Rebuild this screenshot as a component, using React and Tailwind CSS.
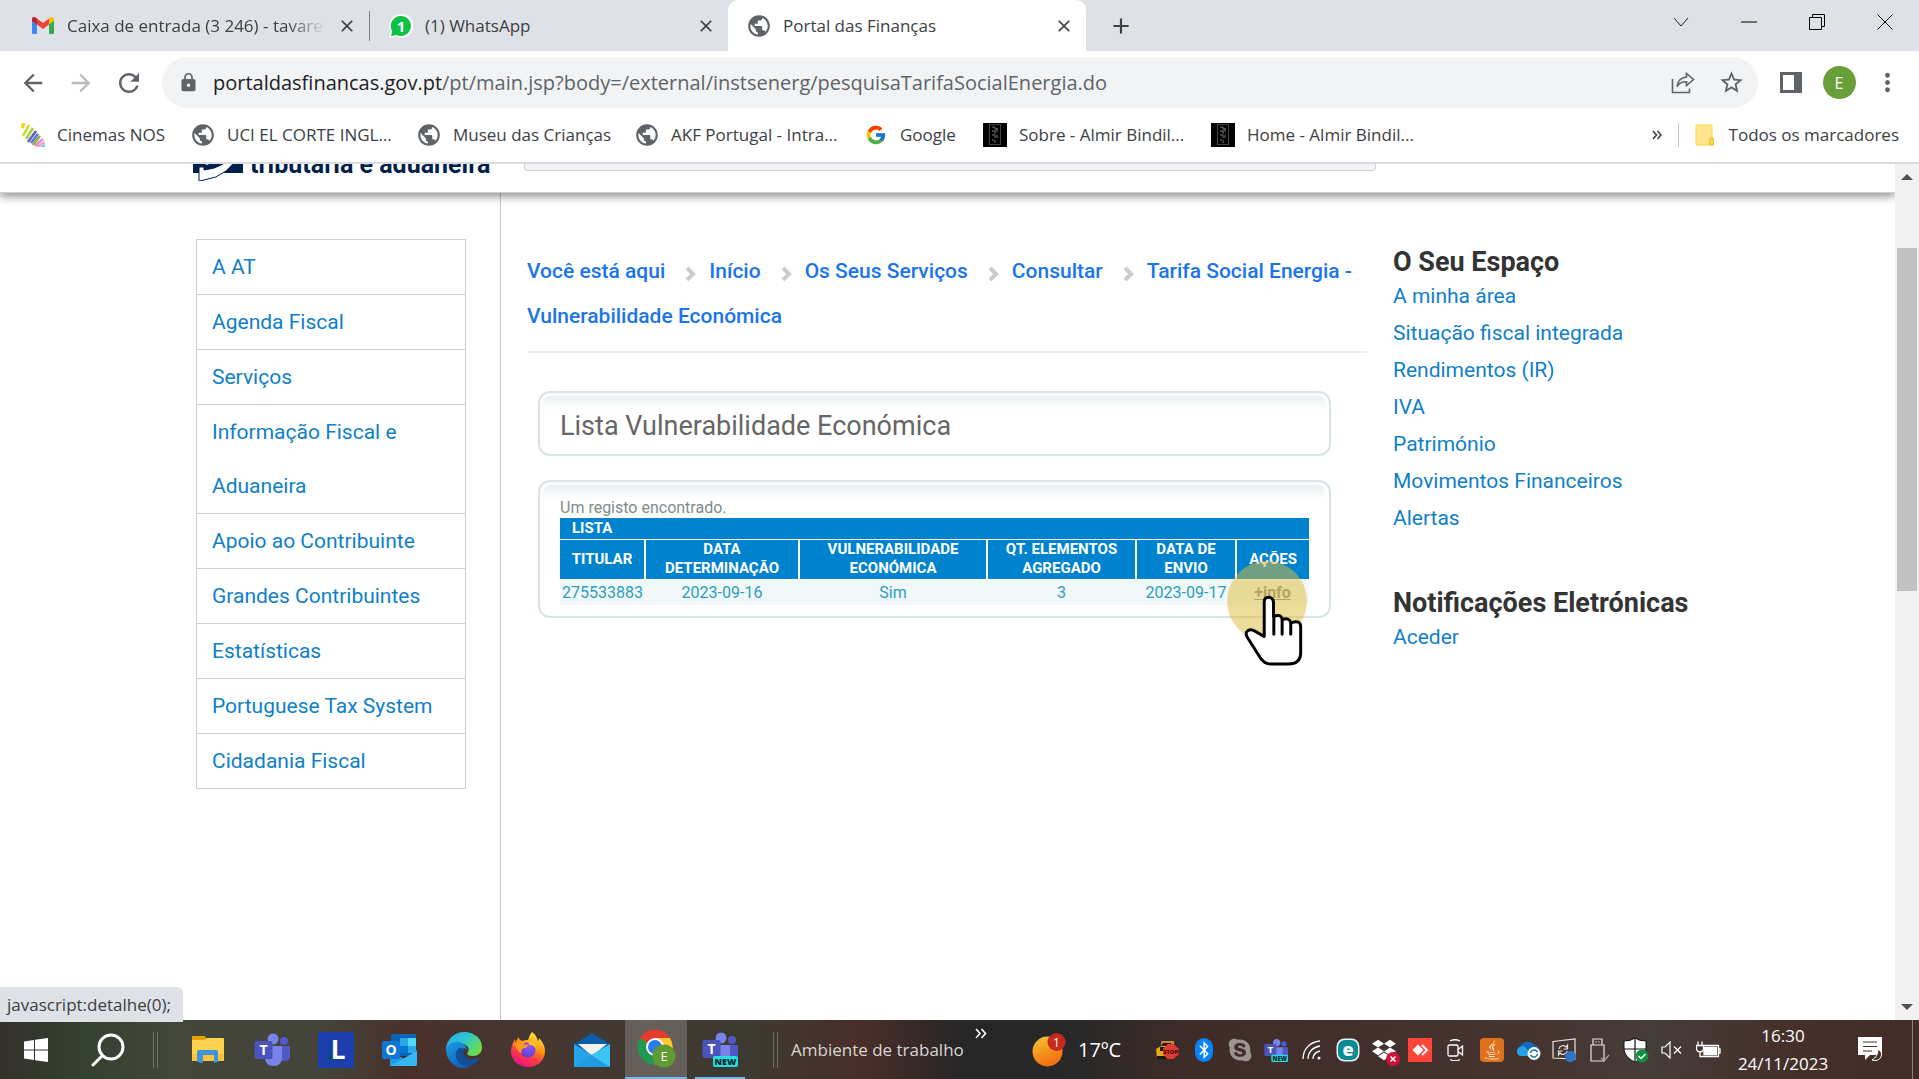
import React from 'react';
import { MdPublic, MdClose, MdAdd, MdArrowBack, MdArrowForward, MdRefresh, MdLock, MdStarBorder, MdMoreVert } from 'react-icons/md';
import { FcGoogle } from 'react-icons/fc';
import { FaDropbox, FaJava, FaSkype, FaBluetoothB } from 'react-icons/fa';

const menuItems = [
  'A AT',
  'Agenda Fiscal',
  'Serviços',
  'Informação Fiscal e Aduaneira',
  'Apoio ao Contribuinte',
  'Grandes Contribuintes',
  'Estatísticas',
  'Portuguese Tax System',
  'Cidadania Fiscal'
];

const breadcrumbs = ['Você está aqui', 'Início', 'Os Seus Serviços', 'Consultar', 'Tarifa Social Energia - Vulnerabilidade Económica'];

const spaceLinks = ['A minha área', 'Situação fiscal integrada', 'Rendimentos (IR)', 'IVA', 'Património', 'Movimentos Financeiros', 'Alertas'];

const columns = [
  { label: 'TITULAR', width: 'w-[85px]' },
  { label: 'DATA DETERMINAÇÃO', width: 'w-[154px]' },
  { label: 'VULNERABILIDADE ECONÓMICA', width: 'w-[188px]' },
  { label: 'QT. ELEMENTOS AGREGADO', width: 'w-[149px]' },
  { label: 'DATA DE ENVIO', width: 'w-[100px]' },
  { label: 'AÇÕES', width: 'w-[73px]' }
];

const rows = [
  { titular: '275533883', determinacao: '2023-09-16', vulneravel: 'Sim', agregado: '3', envio: '2023-09-17' }
];

/* ---------- Browser icons ---------- */

function GmailIcon() {
  return (
    <svg width="22" height="17" viewBox="0 0 22 17">
      <path d="M0 2v13.500q0 1.500 1.500 1.500H5V6z" fill="#4285f4" />
      <path d="M22 2v13.500q0 1.500-1.500 1.500H17V6z" fill="#34a853" />
      <path d="M17 1.500V7.500L22 3.700V2c0-2-2.200-2.600-3.500-1.600z" fill="#fbbc04" />
      <path d="M5 7.500V1.500L11 6l6-4.500v6L11 12z" fill="#ea4335" />
      <path d="M0 2v1.700l5 3.800v-6L3.500.4C2.200-.6 0 0 0 2z" fill="#c5221f" />
    </svg>
  );
}

function WhatsAppIcon() {
  return (
    <svg width="24" height="24" viewBox="0 0 24 24">
      <path d="M12 0a12 12 0 1 1-4 23L0 24l1.500-6A12 12 0 0 1 12 0z" fill="#fff" opacity=".8" />
      <path d="M12 2a10 10 0 1 1-4.500 19L2 22l1.200-5A10 10 0 0 1 12 2z" fill="#0cc143" />
      <text x="12" y="17.500" textAnchor="middle" fontSize="15" fontWeight="700" fill="#fff">1</text>
    </svg>
  );
}

function CinemasIcon() {
  return (
    <svg width="24" height="24" viewBox="0 0 24 24" strokeWidth="2.600">
      <path d="M1 5L3 0" stroke="#f7d117" strokeWidth="3.500" />
      <path d="M2 13L8 2" stroke="#c6dc2a" />
      <path d="M5 16L12 5" stroke="#a9cf38" />
      <path d="M7 19L15 8" stroke="#5a62c8" />
      <path d="M10 20L17 11" stroke="#6a6fd0" />
      <path d="M12 22L19 13" stroke="#7cb342" />
      <path d="M14 23L22 16" stroke="#f08bd0" />
      <path d="M16 24L24 19" stroke="#f4a0da" />
      <path d="M19 24h5v-3z" fill="#3fe0c8" />
    </svg>
  );
}

function AlmirIcon() {
  return (
    <svg width="24" height="24" viewBox="0 0 24 24">
      <rect width="24" height="24" fill="#000" />
      <rect x="6.500" y="1.500" width="11" height="20" fill="none" stroke="#444" />
      <path d="M9 4h3v2h3M9 8h6M12 8v3M9 12h3v3M14 12v3M9 17h2M12 17v3M14 5v2" stroke="#777" fill="none" />
    </svg>
  );
}

function FolderIcon() {
  return (
    <svg width="20" height="22" viewBox="0 0 20 22">
      <path d="M1 1h16v13h1.500v7H1z" fill="#ffe68c" stroke="#fbd54a" />
      <path d="M14.500 21v-5.500q0-1.500 2-1.500t2 1.500V21z" fill="#fbd54a" stroke="#e9bd2c" />
    </svg>
  );
}

function ShareIcon() {
  return (
    <svg width="24" height="24" viewBox="0 0 24 24" fill="none" stroke="#5f6368" strokeWidth="1.600">
      <path d="M1.500 8v13.500h17v-4" />
      <path d="M15.500 2.500l7 6-7 6v-3.800c-4.500 0-7.500 1.300-9.500 4.800.5-5 3.500-8.800 9.500-9.500z" />
    </svg>
  );
}

/* ---------- Taskbar icons ---------- */

function WindowsIcon() {
  return (
    <svg width="24" height="24" viewBox="0 0 24 24" fill="#fff">
      <path d="M0 3.400L10 2v9.500H0zM11 1.800L24 0v11.500H11zM0 12.500h10V22L0 20.600zM11 12.500h13V24l-13-1.800z" />
    </svg>
  );
}

function SearchIcon() {
  return (
    <svg width="34" height="34" viewBox="0 0 34 34" fill="none" stroke="#fff" strokeWidth="3">
      <circle cx="20" cy="14" r="12" />
      <path d="M11.500 22.500L2 32" strokeLinecap="round" />
    </svg>
  );
}

function ExplorerIcon() {
  return (
    <svg width="32" height="28" viewBox="0 0 32 28">
      <path d="M0 1q0-1 1-1h12l2 4H0z" fill="#e8a200" />
      <path d="M0 4h13l2-2h16q1 0 1 1v21q0 1-1 1H1q-1 0-1-1z" fill="#ffd24f" />
      <path d="M0 18h32v6q0 1-1 1H1q-1 0-1-1z" fill="#fcc43a" />
      <path d="M5 26V16q0-2 2-2h17q2 0 2 2v10l-4 1v-8H11v8z" fill="#3a97dc" />
    </svg>
  );
}

function TeamsIcon({ badge, size = 36 }) {
  return (
    <svg width={size} height={size} viewBox="0 0 36 36">
      <circle cx="30" cy="9" r="4" fill="#5059c9" />
      <path d="M26 14h9q1 0 1 1v9q0 5-6 5h-4z" fill="#5059c9" />
      <circle cx="19" cy="7" r="5.500" fill="#7b83eb" />
      <path d="M11 14h17v11q0 9-8.500 9T11 25z" fill="#7b83eb" />
      <rect x="0.500" y="9" width="18" height="18" rx="2" fill="#4b53bc" />
      <text x="9.500" y="23" textAnchor="middle" fontSize="14" fontWeight="700" fill="#fff">T</text>
      {badge && (
        <>
          <rect x="11" y="25" width="25" height="11" rx="2" fill="#22e0e0" />
          <text x="23.500" y="34" textAnchor="middle" fontSize="9" fontWeight="800" fill="#00202a">NEW</text>
        </>
      )}
    </svg>
  );
}

function LIcon() {
  return (
    <svg width="36" height="36" viewBox="0 0 36 36">
      <rect width="36" height="36" fill="#1d3fae" />
      <path d="M13 8L10 28h16l-13-4z" fill="#0c4a66" />
      <text x="20" y="27" textAnchor="middle" fontSize="26" fontWeight="700" fill="#fff">L</text>
    </svg>
  );
}

function OutlookIcon() {
  return (
    <svg width="36" height="36" viewBox="0 0 36 36">
      <rect x="9" y="2" width="25" height="22" rx="1" fill="#0a64b4" />
      <path d="M18 6h8v8h-8z" fill="#28a8ea" />
      <path d="M26 6h8v8h-8z" fill="#50d9ff" />
      <path d="M18 14h8v7h-8z" fill="#0078d4" />
      <path d="M26 14h8v7h-8z" fill="#28a8ea" />
      <path d="M8 18l14 9 13-9v14q0 2-2 2H8z" fill="#1e9de6" />
      <path d="M8 34l27-15v13q0 2-2 2z" fill="#35b8f1" />
      <rect y="9" width="18" height="18" rx="2" fill="#0f78d4" />
      <text x="9" y="23" textAnchor="middle" fontSize="14" fontWeight="700" fill="#fff">O</text>
    </svg>
  );
}

function EdgeIcon() {
  return (
    <svg width="36" height="36" viewBox="0 0 36 36">
      <defs>
        <linearGradient id="edgeTop" x1="0" y1="0" x2="1" y2="0.600">
          <stop offset="0" stopColor="#2aa9e8" />
          <stop offset="0.500" stopColor="#2cc4d4" />
          <stop offset="1" stopColor="#6ade4a" />
        </linearGradient>
        <linearGradient id="edgeSide" x1="0" y1="0" x2="0.600" y2="1">
          <stop offset="0" stopColor="#1b9de2" />
          <stop offset="1" stopColor="#0f63b8" />
        </linearGradient>
      </defs>
      <path d="M0 18C0 8 8 0 18 0c11 0 18 7 18 15 0 6-4 9-9 9-5 0-7-2-5-4 1.500-2 1-7-5-8C9 11 2 14 0 18z" fill="url(#edgeTop)" />
      <path d="M0 17c2-6 8-8 13-7 5 1 8 4 8 8-3-3-8-2-9 3-1 6 4 12 11 14-12 4-23-5-23-18z" fill="url(#edgeSide)" />
      <path d="M12 17c-4 4-3 12 4 16 6 3.500 14 0 17-6 .5-1-.5-1.500-1.500-1-7 3-14 0-14-6 0-1 .5-2 1-3-2-1-4.500-1.500-6.500 0z" fill="#124f97" />
    </svg>
  );
}

function FirefoxIcon() {
  return (
    <svg width="36" height="36" viewBox="0 0 36 36">
      <defs>
        <linearGradient id="foxBody" x1="0.800" y1="0" x2="0.300" y2="1">
          <stop offset="0" stopColor="#fff44f" />
          <stop offset="0.400" stopColor="#ff980e" />
          <stop offset="0.700" stopColor="#ff3647" />
          <stop offset="1" stopColor="#e31587" />
        </linearGradient>
        <radialGradient id="foxGlobe" cx="0.600" cy="0.300" r="0.800">
          <stop offset="0" stopColor="#9059ff" />
          <stop offset="1" stopColor="#5b3cc4" />
        </radialGradient>
      </defs>
      <path d="M22 0c4 3 5 6 6 9 1-1 1-2 1-3 4 4 6 9 6 13 0 9-7 16-17 16C8 35 1 28 1 19c0-5 2-9 4-12 0 1 0 2 .5 3C7 8 8 6 8 5c1 2 2 3 4 4 2-1 4-1 6-1 1-3 2-6 4-8z" fill="url(#foxBody)" />
      <circle cx="18" cy="18" r="7.500" fill="url(#foxGlobe)" />
      <path d="M4 12c3-2 6-2 8 0l6 1c0 2-2 3-5 3.500-2 1-2 3-1 5-4-2-6-5-8-9.500z" fill="#ff9a1f" />
      <path d="M18 9c5 0 9 4 9 9-2-4-5-5-8-5z" fill="#ffc02e" />
    </svg>
  );
}

function MailIcon() {
  return (
    <svg width="36" height="34" viewBox="0 0 36 34">
      <path d="M0 11L18 0l18 11v6H0z" fill="#0a5ba8" />
      <path d="M4 11h29L18 23z" fill="#f2f2f2" />
      <path d="M0 11l18 11v12H0z" fill="#25a5e8" />
      <path d="M36 11L17 22 0 34h36z" fill="#3cc4f4" />
      <path d="M17 22l19 12H0z" fill="#1f9be4" />
    </svg>
  );
}

function ChromeIcon() {
  return (
    <svg width="42" height="40" viewBox="0 0 42 40">
      <circle cx="20" cy="18" r="17.500" fill="#e33b2e" />
      <path d="M4.800 9.300A17.500 17.500 0 0 0 20 35.500l8-13z" fill="#1e9b50" />
      <path d="M20 9h15A17.500 17.500 0 0 1 20 35.500l8-14z" fill="#fcc934" />
      <circle cx="20" cy="18" r="9" fill="#fff" />
      <circle cx="20" cy="18" r="7" fill="#2a7be8" />
      <circle cx="29" cy="27" r="11.500" fill="#5f9a33" />
      <text x="29" y="32" textAnchor="middle" fontSize="13" fill="#fff">E</text>
    </svg>
  );
}

function WeatherIcon() {
  return (
    <svg width="34" height="34" viewBox="0 0 34 34">
      <defs>
        <linearGradient id="sun" x1="0.200" y1="0" x2="0.600" y2="1">
          <stop offset="0" stopColor="#f5c234" />
          <stop offset="1" stopColor="#f2690c" />
        </linearGradient>
      </defs>
      <circle cx="15.500" cy="18.500" r="15" fill="url(#sun)" />
      <circle cx="24.500" cy="9" r="9" fill="#c42b1c" />
      <text x="24.500" y="13.500" textAnchor="middle" fontSize="12" fill="#fff">1</text>
    </svg>
  );
}

/* ---------- Tray icons ---------- */

const trayIcons = [
  {
    name: 'Stop',
    icon: (
      <svg width="24" height="22" viewBox="0 0 24 22">
        <path d="M5 3q0-1 1-1h12v3h-3L5 8z" fill="#c98a3a" />
        <path d="M0 10l5-3h5v12H1z" fill="#e0a81c" />
        <path d="M4 8h5v4H4zM1 17h12v3H1zM7 4h8v3H5z" fill="#1c1a18" />
        <path d="M11.500 5h6l5 4.500v6l-5 4.500h-6L7 15.500v-6z" fill="#e23a2c" />
        <text x="14.700" y="15" textAnchor="middle" fontSize="6" fontWeight="700" fill="#1c0705">STOP</text>
      </svg>
    )
  },
  {
    name: 'Bluetooth',
    icon: (
      <span className="flex h-6 w-[18px] items-center justify-center rounded-full bg-[#0a84f5]">
        <FaBluetoothB size={18} color="#fff" />
      </span>
    )
  },
  { name: 'Skype', icon: <FaSkype size={26} color="#9c9490" /> },
  { name: 'Teams', icon: <TeamsIcon badge size={24} /> },
  {
    name: 'Wi-Fi',
    icon: (
      <svg width="20" height="20" viewBox="0 0 20 20" fill="none" stroke="#fff" strokeWidth="1.300">
        <path d="M1 19C1 9 8 2 18 1M6 19c0-7 5-12 12-13M11 19c0-4 3-7 7-8" />
        <circle cx="17" cy="18" r="1.500" fill="#fff" stroke="none" />
      </svg>
    )
  },
  {
    name: 'ESET',
    icon: (
      <svg width="24" height="24" viewBox="0 0 24 24">
        <rect x="0.500" y="0.500" width="23" height="23" rx="8" fill="#e8f4f4" />
        <rect x="2" y="2" width="20" height="20" rx="7" fill="#0a8a92" />
        <text x="12" y="17.500" textAnchor="middle" fontSize="18" fontWeight="800" fill="#fff">e</text>
      </svg>
    )
  },
  {
    name: 'Dropbox',
    icon: (
      <span className="relative flex">
        <FaDropbox size={24} color="#fff" />
        <svg className="absolute -right-1 -bottom-1" width="14" height="14" viewBox="0 0 14 14">
          <circle cx="7" cy="7" r="7" fill="#d0103a" />
          <path d="M4.500 4.500l5 5M9.500 4.500l-5 5" stroke="#fff" strokeWidth="1.500" />
        </svg>
      </span>
    )
  },
  {
    name: 'AnyDesk',
    icon: (
      <svg width="24" height="24" viewBox="0 0 24 24">
        <rect width="24" height="24" fill="#ff4438" />
        <path d="M4.500 12L10 6.500l5.500 5.500-5.500 5.500z" fill="#fff" />
        <path d="M14 7l5 5-5 5" fill="none" stroke="#fff" strokeWidth="2" />
      </svg>
    )
  },
  {
    name: 'Câmara',
    icon: (
      <svg width="18" height="22" viewBox="0 0 18 22" fill="none" stroke="#fff" strokeWidth="1.300">
        <rect x="1" y="6" width="10" height="11" rx="1.500" />
        <path d="M11 10.500l4.500-3.500v9L11 12.500" />
        <path d="M3 2c3-1.500 7-1.500 10 0M3 20.500c3 1.500 7 1.500 10 0" />
      </svg>
    )
  },
  {
    name: 'Java',
    icon: (
      <span className="flex size-6 items-center justify-center rounded-sm bg-[#df711b]">
        <FaJava size={20} color="#fff" />
      </span>
    )
  },
  {
    name: 'OneDrive',
    icon: (
      <svg width="26" height="22" viewBox="0 0 26 22">
        <path d="M5 17a5 5 0 0 1 0-9A8 8 0 0 1 19 6q5 1 5 6v5z" fill="#0f6cbd" />
        <path d="M5 17a5 5 0 0 1 1-9.500q4-1 6 2.500l7 7z" fill="#28a0e8" />
        <circle cx="19" cy="14.500" r="6.500" fill="#fff" />
        <path d="M15.500 14a3.500 3.500 0 0 1 6-2l1 1M22.500 15a3.500 3.500 0 0 1-6 2l-1-1" fill="none" stroke="#0f6cbd" strokeWidth="1.500" />
      </svg>
    )
  },
  {
    name: 'Sincronização',
    icon: (
      <svg width="24" height="24" viewBox="0 0 24 24" fill="none" stroke="#e8e4e2" strokeWidth="1.200">
        <path d="M1 3.500L23 1v20L1 20z" />
        <path d="M7 11a4 4 0 0 1 7-2l1.500-2v4h-4M15 13a4 4 0 0 1-7 2l-1.500 2v-4h4" />
        <circle cx="18.500" cy="18.500" r="5.500" fill="#2e75c4" stroke="none" />
      </svg>
    )
  },
  {
    name: 'USB',
    icon: (
      <svg width="20" height="24" viewBox="0 0 20 24" fill="none" stroke="#e8e4e2" strokeWidth="1.200">
        <path d="M3 7V1h9v6M1 7h13v16H1z" />
        <path d="M5.500 4h1M8.500 4h1" strokeWidth="1.500" />
        <path d="M11 20l3 3 5-6" stroke="#aaa5a2" />
      </svg>
    )
  },
  {
    name: 'Segurança',
    icon: (
      <svg width="26" height="26" viewBox="0 0 26 26">
        <path d="M12 1q4 3 11 3v7c0 6-4 11-11 14C5 22 1 17 1 11V4q7 0 11-3z" fill="#fff" stroke="#111" />
        <path d="M12 1v23M1 12h22" stroke="#111" strokeWidth="1.200" />
        <circle cx="19" cy="19" r="6.500" fill="#10903c" />
        <path d="M15.500 19l2.500 2.500 4.500-4.500" fill="none" stroke="#fff" strokeWidth="1.500" />
      </svg>
    )
  },
  {
    name: 'Volume',
    icon: (
      <svg width="22" height="18" viewBox="0 0 22 18" fill="none" stroke="#fff" strokeWidth="1.200">
        <path d="M1 6h3l5-5v16l-5-5H1z" />
        <path d="M13 5.500l7 7M20 5.500l-7 7" />
      </svg>
    )
  },
  {
    name: 'Bateria',
    icon: (
      <svg width="25" height="18" viewBox="0 0 25 18" fill="none" stroke="#fff" strokeWidth="1.300">
        <path d="M7 4.500h15.500v11H8" />
        <path d="M8 6.500h12.500v7H8z" fill="#fff" />
        <path d="M22.500 8h1.500v4h-1.500M2 0.500v4M6 0.500v4M0.500 4.500h7v4q-1 2.500-3.500 2.500T0.500 8.500zM4 11v4.500h4" />
      </svg>
    )
  }
];

/* ---------- Browser chrome ---------- */

function Tab({ icon, title, active, separator, fade }) {
  return (
    <div className={`flex h-full w-[358px] min-w-0 items-center pr-3 pl-[19px] ${active ? 'rounded-t-[10px] bg-white' : ''}`}>
      <span className="flex w-6 shrink-0 justify-center">{icon}</span>
      <span
        className={`ml-3 flex-1 overflow-hidden text-[17px] whitespace-nowrap text-[#3c4043] ${
          fade ? 'mask-r-from-85%' : ''
        }`}
      >
        {title}
      </span>
      <button aria-label="Fechar separador" className="ml-3 shrink-0"><MdClose size={20} color="#3c4043" /></button>
      {separator && <span className="-mr-3 ml-3 h-[30px] w-px bg-[#80868b]" />}
    </div>
  );
}

function Bookmark({ icon, label, width = '' }) {
  return (
    <a href="#" className={`flex shrink-0 items-center gap-3 ${width}`}>
      <span className="flex w-6 justify-center">{icon}</span>
      <span className="whitespace-nowrap">{label}</span>
    </a>
  );
}

function BrowserBar() {
  const globe = <MdPublic size={26} color="#5f6368" className="shrink-0" />;
  const windowButton = 'flex h-full w-[68px] items-center justify-center pb-2';

  return (
    <header className="shrink-0 text-[17px] text-[#3c4043]">
      <div className="flex h-[51px] bg-[#dee1e6] pl-3">
        <Tab icon={<GmailIcon />} title="Caixa de entrada (3 246) - tavares" separator fade />
        <Tab icon={<WhatsAppIcon />} title="(1) WhatsApp" />
        <Tab icon={globe} title="Portal das Finanças" active />
        <button aria-label="Novo separador" className="ml-[22px]"><MdAdd size={26} color="#3c4043" /></button>
        <div className="ml-auto flex">
          <button aria-label="Pesquisar separadores" className={windowButton}>
            <svg width="16" height="10" viewBox="0 0 16 10" fill="none" stroke="#222"><path d="M1 1l7 8 7-8" /></svg>
          </button>
          <button aria-label="Minimizar" className={windowButton}>
            <svg width="16" height="2" viewBox="0 0 16 2"><path d="M0 1h16" stroke="#000" /></svg>
          </button>
          <button aria-label="Restaurar" className={windowButton}>
            <svg width="16" height="16" viewBox="0 0 16 16" fill="none" stroke="#000"><path d="M.5 3.500h12v12H.500zM3.500 3.500v-3h12v12h-3" /></svg>
          </button>
          <button aria-label="Fechar" className={windowButton}>
            <svg width="16" height="16" viewBox="0 0 16 16" stroke="#000"><path d="M.5.5l15 15M15.500.5l-15 15" /></svg>
          </button>
        </div>
      </div>

      <div className="flex h-[63px] items-center bg-white pl-[9px]">
        <button aria-label="Retroceder" className="flex w-12 justify-center"><MdArrowBack size={28} color="#5f6368" /></button>
        <button aria-label="Avançar" className="flex w-12 justify-center"><MdArrowForward size={28} color="#babcbe" /></button>
        <button aria-label="Recarregar" className="flex w-12 justify-center"><MdRefresh size={30} color="#5f6368" /></button>
        <div className="ml-[9px] flex h-[51px] flex-1 items-center rounded-full bg-[#f1f3f4] pr-[3px] pl-4">
          <MdLock size={21} color="#5f6368" />
          <div className="ml-3.5 flex-1 text-[20px] whitespace-nowrap text-[#5f6368]">
            <span className="text-[#202124]">portaldasfinancas.gov.pt</span>/pt/main.jsp?body=/external/instsenerg/pesquisaTarifaSocialEnergia.do
          </div>
          <button aria-label="Partilhar" className="flex w-12 justify-center"><ShareIcon /></button>
          <button aria-label="Adicionar aos marcadores" className="flex w-12 justify-center"><MdStarBorder size={27} color="#5f6368" /></button>
        </div>
        <div className="flex items-center pr-2 pl-[9px]">
          <button aria-label="Painel lateral" className="flex w-12 justify-center">
            <span className="h-[21px] w-[22px] border-[3px] border-r-8 border-[#5f6368]" />
          </button>
          <button aria-label="Perfil" className="flex w-12 justify-center">
            <span className="flex size-[33px] items-center justify-center rounded-full bg-[#689f38] text-base text-white">E</span>
          </button>
          <button aria-label="Menu" className="flex w-12 justify-center"><MdMoreVert size={29} color="#5f6368" /></button>
        </div>
      </div>

      <div className="flex h-[50px] items-center border-b-2 border-[#dadce0] bg-white pb-1.5 pl-[21px]">
        <Bookmark icon={<CinemasIcon />} label="Cinemas NOS" width="w-[170px]" />
        <Bookmark icon={globe} label="UCI EL CORTE INGL..." width="w-[226px]" />
        <Bookmark icon={globe} label="Museu das Crianças" width="w-[218px]" />
        <Bookmark icon={globe} label="AKF Portugal - Intra..." width="w-[229px]" />
        <Bookmark icon={<FcGoogle size={22} />} label="Google" width="w-[119px]" />
        <Bookmark icon={<AlmirIcon />} label="Sobre - Almir Bindil..." width="w-[228px]" />
        <Bookmark icon={<AlmirIcon />} label="Home - Almir Bindil..." />
        <div className="ml-auto flex items-center pr-5">
          <button aria-label="Mais marcadores">
            <svg width="10" height="10" viewBox="0 0 10 10" fill="none" stroke="#3c4043" strokeWidth="1.600"><path d="M1 1l3.500 4L1 9M5.500 1L9 5 5.500 9" /></svg>
          </button>
          <span className="mr-3.5 ml-4 h-6 w-px bg-[#c4c7cb]" />
          <Bookmark icon={<FolderIcon />} label="Todos os marcadores" />
        </div>
      </div>
    </header>
  );
}

/* ---------- Portal page ---------- */

function Panel({ className = '', children }) {
  return (
    <section className="rounded-xl border-2 border-[#d8e5e4] bg-white p-[3px]">
      <div className={`rounded-lg bg-[linear-gradient(to_bottom,#e8f0f1,#fff_14px)] px-[17px] ${className}`}>{children}</div>
    </section>
  );
}

function PortalHeader() {
  return (
    <div className="relative z-10 flex h-[29px] shrink-0 items-end overflow-visible border-b border-[#cfcfcf] bg-white pl-[193px] shadow-[0_4px_8px_rgba(0,0,0,0.4)]">
      <div className="flex h-full w-[331px] items-end overflow-hidden pb-[11px]">
        <svg className="shrink-0" width="50" height="40" viewBox="0 0 50 40">
          <path d="M0 0h50v32H0z" fill="#001f4a" />
          <path d="M6 40V26h5v3q22-2 32-20h6Q36 36 11 39z" fill="#fff" stroke="#001f4a" />
          <path d="M10 22l14-8 4 3-14 7z" fill="#fff" />
        </svg>
        <span className="ml-[7px] text-[25px] leading-[32px] font-bold whitespace-nowrap text-[#001f4a]">tributária e aduaneira</span>
      </div>
      <div className="mb-[21px] h-[7px] w-[852px] rounded-b-sm border border-t-0 border-[#cfd1d4] bg-[#f1f3f4]" />
    </div>
  );
}

function SideMenu() {
  return (
    <nav className="border-r border-[#c5c9cd] pt-[46px] pl-[196px]">
      <ul className="w-[270px] border border-[#ccced1] text-[21px] text-[#0f7fc9]">
        {menuItems.map((item, i) => (
          <li key={item} className={`pr-8 pl-[15px] leading-[54px] ${i > 0 ? 'border-t border-[#ccced1]' : ''}`}>
            <a href="#">{item}</a>
          </li>
        ))}
      </ul>
    </nav>
  );
}

function Breadcrumbs() {
  return (
    <nav className="border-b-2 border-[#eeeeee] pb-3 text-[21px] leading-[45px] font-medium text-[#1a75e8]">
      {breadcrumbs.map((item, i) => (
        <React.Fragment key={item}>
          {i > 0 && (
            <svg className="mr-3 ml-5 inline" width="12" height="20" viewBox="0 0 12 20" fill="none" stroke="#cccccc" strokeWidth="4">
              <path d="M2 6l6 6-6 6" />
            </svg>
          )}
          <a href="#">{item}</a>
        </React.Fragment>
      ))}
    </nav>
  );
}

function ResultsTable() {
  return (
    <table className="w-full table-fixed border-collapse text-center">
      <colgroup>
        {columns.map(c => <col key={c.label} className={c.width} />)}
      </colgroup>
      <thead className="bg-[#0083ce] text-[15px] leading-[19px] font-bold text-white">
        <tr className="border-b border-white">
          <th colSpan={6} className="h-[21px] pl-3 text-left leading-[17px]">LISTA</th>
        </tr>
        <tr className="h-10 border-b border-white">
          {columns.map(c => (
            <th key={c.label} className="border-r-2 border-white px-2 last:border-r-0">{c.label}</th>
          ))}
        </tr>
      </thead>
      <tbody className="text-[16px] leading-[25px] text-[#2d9dbd]">
        {rows.map(r => (
          <tr key={r.titular} className="bg-[#f0f8fa]">
            <td>{r.titular}</td>
            <td>{r.determinacao}</td>
            <td>{r.vulneravel}</td>
            <td>{r.agregado}</td>
            <td>{r.envio}</td>
            <td className="relative">
              <a href="#" className="font-bold text-[#8a8a88] underline">+info</a>
              <Pointer />
            </td>
          </tr>
        ))}
      </tbody>
    </table>
  );
}

function Pointer() {
  return (
    <div className="pointer-events-none absolute -top-[19px] -left-[9px] size-20 rounded-full bg-[rgba(222,186,57,0.51)]">
      <svg className="absolute top-[33px] left-[16px]" width="61" height="73" viewBox="850 668 184 220" fill="#fff" stroke="#000" strokeWidth="9" strokeLinejoin="round" strokeLinecap="round">
        <path d="M914 796V692q0-14 13-14t15 14v44q22-10 27 9 20-8 26 10 29-10 29 12v78q0 34-38 34h-54q-16 0-28-16l-42-66q-6-12 2-18 10-7 22 1z" />
        <path d="M943 735v54M968 745v44M994 755v34" fill="none" />
      </svg>
    </div>
  );
}

function Portal() {
  return (
    <main className="relative flex min-h-0 flex-1 font-[Roboto,sans-serif]">
      <div className="flex min-w-0 flex-1 flex-col overflow-hidden bg-white">
        <PortalHeader />
        <div className="grid flex-1 grid-cols-[501px_minmax(0,866px)_minmax(0,1fr)]">
          <SideMenu />

          <div className="pt-14 pl-[26px]">
            <Breadcrumbs />
            <div className="flex flex-col gap-6 pt-[38px] pr-9 pl-[11px]">
              <Panel className="pt-3 pb-1.5">
                <h1 className="text-[27px] leading-[37px] text-[#666666]">Lista Vulnerabilidade Económica</h1>
              </Panel>
              <Panel className="pt-3 pb-2">
                <p className="text-[16px] leading-[21px] text-[#808b8c]">Um registo encontrado.</p>
                <ResultsTable />
              </Panel>
            </div>
          </div>

          <aside className="pt-[53px] pl-[26px] text-[21px] leading-[37px] text-[#0f7fc9]">
            <h2 className="text-[27px] leading-[32px] font-bold text-[#333333]">O Seu Espaço</h2>
            <ul>
              {spaceLinks.map(link => <li key={link}><a href="#">{link}</a></li>)}
            </ul>
            <h2 className="mt-[50px] text-[27px] leading-[32px] font-bold text-[#333333]">Notificações Eletrónicas</h2>
            <a href="#">Aceder</a>
          </aside>
        </div>
      </div>

      {/* Scrollbar */}
      <div className="flex w-6 shrink-0 flex-col bg-[#f1f1f1]">
        <span className="flex h-[26px] items-center justify-center">
          <svg width="12" height="6" viewBox="0 0 12 6" fill="#505050"><path d="M0 6l6-6 6 6z" /></svg>
        </span>
        <div className="flex-1 px-0.5 pt-[58px]">
          <div className="h-[46%] bg-[#c1c1c1]" />
        </div>
        <span className="flex h-[26px] items-center justify-center">
          <svg width="12" height="6" viewBox="0 0 12 6" fill="#505050"><path d="M0 0l6 6 6-6z" /></svg>
        </span>
      </div>

      <div className="absolute -bottom-0.5 left-0 z-20 rounded-tr-md bg-[#dee1e6] pr-3 pl-[7px] font-['Open_Sans',sans-serif] text-[17px] leading-[35px] text-[#3c4043]">
        javascript:detalhe(0);
      </div>
    </main>
  );
}

/* ---------- Taskbar ---------- */

function TaskButton({ label, active, open, children }) {
  return (
    <button aria-label={label} className="flex h-full w-16 justify-center px-px">
      <span
        className={`flex h-full items-center justify-center ${active ? 'w-full border-b-2 border-[#76b9ed] bg-white/20' : ''} ${
          open ? 'w-[50px] border-b-2 border-[#76b9ed]' : ''
        }`}
      >
        {children}
      </span>
    </button>
  );
}

function Divider() {
  return <span className="h-9 w-[5px] border-x border-white/25" />;
}

function Taskbar() {
  return (
    <footer className="flex h-[59px] shrink-0 items-center bg-[linear-gradient(90deg,#33312a_0%,#334030_4%,#43463a_9%,#44443a_17%,#4a302b_21%,#463632_27%,#3c3a31_39%,#4a2e28_45%,#262626_50%,#282828_56%,#3f2c28_62%,#463430_80%,#453d39_86%,#45302b_93%,#432c28_100%)] text-white">
      <button aria-label="Iniciar" className="flex w-[72px] justify-center"><WindowsIcon /></button>
      <button aria-label="Procurar" className="flex w-[72px] justify-center"><SearchIcon /></button>
      <span className="mr-[18px] ml-[9px] flex"><Divider /></span>
      <TaskButton label="Explorador de ficheiros"><ExplorerIcon /></TaskButton>
      <TaskButton label="Teams"><TeamsIcon /></TaskButton>
      <TaskButton label="Aplicação L"><LIcon /></TaskButton>
      <TaskButton label="Outlook"><OutlookIcon /></TaskButton>
      <TaskButton label="Edge"><EdgeIcon /></TaskButton>
      <TaskButton label="Firefox"><FirefoxIcon /></TaskButton>
      <TaskButton label="Correio"><MailIcon /></TaskButton>
      <TaskButton label="Chrome" active><ChromeIcon /></TaskButton>
      <TaskButton label="Teams novo" open><TeamsIcon badge /></TaskButton>
      <span className="mr-[13px] ml-[21px] flex"><Divider /></span>
      <span className="w-[184px] text-[17px] whitespace-nowrap text-[#d8d5d3]">Ambiente de trabalho</span>
      <button aria-label="Mostrar mais" className="self-start pt-2">
        <svg width="12" height="11" viewBox="0 0 12 11" fill="none" stroke="#fff" strokeWidth="1.600"><path d="M1 1l4 4.500L1 10M6.500 1l4 4.500-4 4.500" /></svg>
      </button>

      <div className="ml-auto flex h-full items-center">
        <button className="mr-[29px] flex items-center gap-3 text-[20px]">
          <WeatherIcon />
          <span>17ºC</span>
        </button>
        {trayIcons.map(t => (
          <button key={t.name} aria-label={t.name} className="flex w-9 items-center justify-center">{t.icon}</button>
        ))}
        <div className="w-[114px] text-center text-[17px] leading-[28px]">
          <div>16:30</div>
          <div>24/11/2023</div>
        </div>
        <button aria-label="Notificações" className="flex w-[60px] justify-center">
          <svg width="25" height="25" viewBox="0 0 25 25">
            <path d="M0 0h24v18H12l-5 5v-5H0z" fill="#fff" />
            <path d="M5 5h14M5 9.500h14M5 14h9" stroke="#43302b" />
            <path d="M20 12q5 3 3 8-3 5-9 3 6-3 6-11z" fill="#43302b" stroke="#fff" />
          </svg>
        </button>
        <span className="mr-1.5 ml-3 h-full w-px bg-white/40" />
      </div>
    </footer>
  );
}

export default function App() {
  return (
    <div className="flex h-screen flex-col overflow-hidden bg-white font-['Open_Sans',sans-serif]">
      <BrowserBar />
      <Portal />
      <Taskbar />
    </div>
  );
}
